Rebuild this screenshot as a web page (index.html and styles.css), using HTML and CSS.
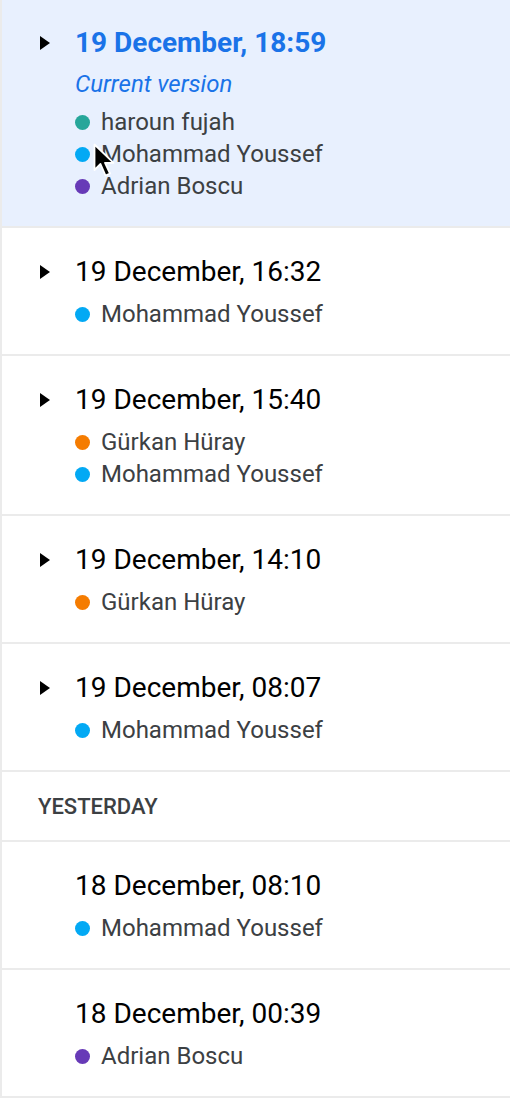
FILE: index.html
```html
<!DOCTYPE html>
<html>
<head>
<meta charset="utf-8">
<link rel="stylesheet" href="styles.css">
</head>
<body>
<div class="list">
  <div class="item current">
    <span class="caret"></span>
    <div class="body">
      <div class="title">19 December, 18:59</div>
      <div class="subtitle">Current version</div>
      <div class="names">
        <div class="name"><span class="dot teal"></span>haroun fujah</div>
        <div class="name"><span class="dot sky"></span>Mohammad Youssef</div>
        <div class="name"><span class="dot purple"></span>Adrian Boscu</div>
      </div>
    </div>
    <svg class="cursor" width="24" height="36" viewBox="0 0 24 36"><path d="M1.5 1.5 L1.5 27 L7.5 21 L12.5 32.5 L17 30.5 L12 19.8 L20.5 19.8 Z" fill="#000" stroke="#fff" stroke-width="1.8" stroke-linejoin="round"/></svg>
  </div>
  <div class="item">
    <span class="caret"></span>
    <div class="body">
      <div class="title">19 December, 16:32</div>
      <div class="names">
        <div class="name"><span class="dot sky"></span>Mohammad Youssef</div>
      </div>
    </div>
  </div>
  <div class="item">
    <span class="caret"></span>
    <div class="body">
      <div class="title">19 December, 15:40</div>
      <div class="names">
        <div class="name"><span class="dot orange"></span>Gürkan Hüray</div>
        <div class="name"><span class="dot sky"></span>Mohammad Youssef</div>
      </div>
    </div>
  </div>
  <div class="item">
    <span class="caret"></span>
    <div class="body">
      <div class="title">19 December, 14:10</div>
      <div class="names">
        <div class="name"><span class="dot orange"></span>Gürkan Hüray</div>
      </div>
    </div>
  </div>
  <div class="item">
    <span class="caret"></span>
    <div class="body">
      <div class="title">19 December, 08:07</div>
      <div class="names">
        <div class="name"><span class="dot sky"></span>Mohammad Youssef</div>
      </div>
    </div>
  </div>
  <div class="section">YESTERDAY</div>
  <div class="item">
    <span class="caret hidden"></span>
    <div class="body">
      <div class="title">18 December, 08:10</div>
      <div class="names">
        <div class="name"><span class="dot sky"></span>Mohammad Youssef</div>
      </div>
    </div>
  </div>
  <div class="item">
    <span class="caret hidden"></span>
    <div class="body">
      <div class="title">18 December, 00:39</div>
      <div class="names">
        <div class="name"><span class="dot purple"></span>Adrian Boscu</div>
      </div>
    </div>
  </div>
</div>
</body>
</html>
```
FILE: styles.css
```css
html, body {
  margin: 0;
  padding: 0;
  background: #fff;
}
body {
  font-family: Roboto, "Liberation Sans", sans-serif;
  width: 510px;
  height: 1100px;
  overflow: hidden;
}
.list {
  border-left: 2px solid #ebebeb;
  display: flex;
  flex-direction: column;
}
.item {
  position: relative;
  display: flex;
  align-items: flex-start;
  padding: 27px 0 24px 38px;
  border-bottom: 2px solid #ebebeb;
}
.item.current {
  background: #e8f0fe;
  padding-top: 26px;
  padding-bottom: 24px;
}
.caret {
  width: 0;
  height: 0;
  border-top: 7px solid transparent;
  border-bottom: 7px solid transparent;
  border-left: 10px solid #000;
  margin-top: 10px;
  margin-right: 25px;
  flex: none;
}
.caret.hidden {
  visibility: hidden;
}
.body {
  display: flex;
  flex-direction: column;
}
.title {
  font-size: 28px;
  line-height: 34px;
  color: #000;
  margin-bottom: 9px;
}
.current .title {
  color: #1a73e8;
  font-weight: 700;
  margin-bottom: 8px;
}
.subtitle {
  font-size: 24px;
  line-height: 32px;
  font-style: italic;
  color: #1a73e8;
  margin-bottom: 6px;
}
.names {
  display: flex;
  flex-direction: column;
}
.name {
  display: flex;
  align-items: center;
  font-size: 24px;
  line-height: 32px;
  color: #3c4043;
}
.dot {
  width: 15px;
  height: 15px;
  border-radius: 50%;
  margin-right: 11px;
  flex: none;
}
.teal { background: #26a69a; }
.sky { background: #03a9f4; }
.purple { background: #673ab7; }
.orange { background: #f57c00; }
.section {
  height: 68px;
  display: flex;
  align-items: center;
  padding-left: 36px;
  font-size: 22px;
  font-weight: 500;
  color: #3c4043;
  border-bottom: 2px solid #ebebeb;
}
.cursor {
  position: absolute;
  left: 91px;
  top: 143px;
}
```
